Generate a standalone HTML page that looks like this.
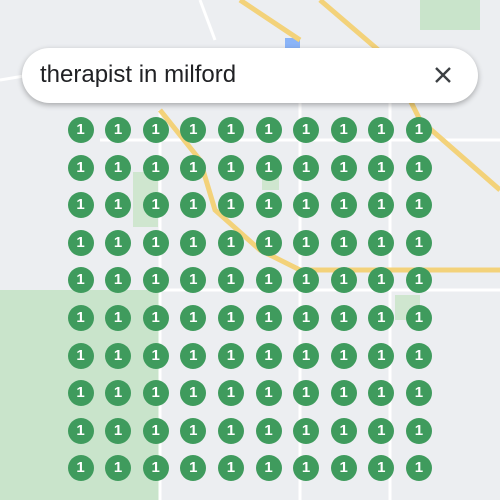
<!DOCTYPE html>
<html><head><style>
html,body{margin:0;padding:0;width:500px;height:500px;overflow:hidden;background:#eceef1;font-family:"Liberation Sans",Arial,sans-serif}
.map{position:absolute;left:0;top:0}
.bar{position:absolute;left:22px;top:48px;width:456px;height:55px;background:#fff;border-radius:28px;box-shadow:0 2px 6px rgba(0,0,0,.3)}
.bar span{position:absolute;left:18px;top:13px;font-size:24px;color:#202124}
.dot{position:absolute;width:26px;height:26px;border-radius:50%;background:#3f9b5d;color:#fff;font-weight:bold;font-size:15px;line-height:26px;text-align:center}
</style></head><body>
<svg class="map" width="500" height="500">
<rect x="0" y="290" width="160" height="210" fill="#c9e4cb"/>
<rect x="0" y="470" width="30" height="30" fill="#c9e4cb"/>
<rect x="133" y="172" width="25" height="55" fill="#cfe6cf"/>
<rect x="262" y="160" width="17" height="30" fill="#cfe6cf"/>
<rect x="420" y="0" width="60" height="30" fill="#c9e4cb"/>
<rect x="395" y="295" width="25" height="25" fill="#cfe6cf"/>
<rect x="285" y="38" width="15" height="10" fill="#8ab4f8"/>
<g stroke="#fff" stroke-width="3" fill="none">
<path d="M160 110 L160 500"/><path d="M300 100 L300 500"/><path d="M390 100 L390 500"/>
<path d="M100 140 L500 140"/><path d="M160 290 L500 290"/><path d="M0 80 L30 75"/>
<path d="M200 0 L215 40"/>
</g>
<g stroke="#f3d27a" stroke-width="5" fill="none">
<path d="M240 0 L300 40 M160 110 L200 160 L215 210 L260 250 L300 270 L380 270 L500 270"/>
<path d="M320 0 L390 60 L420 120 L500 190"/>
</g>
</svg>
<div class="bar"><span>therapist in milford</span>
<svg style="position:absolute;left:412px;top:18px" width="18" height="18"><path d="M2 2L16 16M16 2L2 16" stroke="#3c4043" stroke-width="2.4"/></svg></div>
<div id="g"></div>
<script>
var h='';for(var r=0;r<10;r++)for(var c=0;c<10;c++){var x=80.5+c*37.6-13,y=130+r*37.6-13;h+='<div class="dot" style="left:'+x+'px;top:'+y+'px">1</div>';}
document.getElementById('g').innerHTML=h;
</script>
</body></html>
